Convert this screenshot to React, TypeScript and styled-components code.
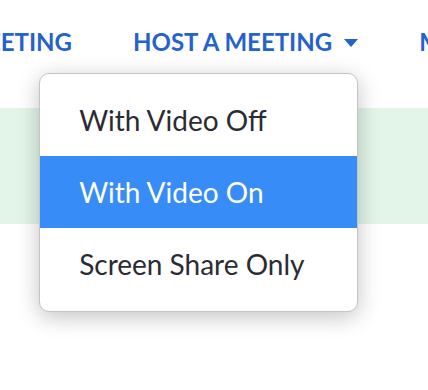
import React from 'react'
import styled, { createGlobalStyle } from 'styled-components'

const GlobalStyle = createGlobalStyle`
  html, body {
    margin: 0;
    padding: 0;
    background: #ffffff;
    overflow: hidden;
  }
  body {
    font-family: Lato, 'Open Sans', sans-serif;
    width: 428px;
    height: 390px;
  }
`

const items = ['With Video Off', 'With Video On', 'Screen Share Only']

export default function App() {
  return (
    <>
      <GlobalStyle />
      <Page>
        <Nav>
          <ClippedItem>
            <NavLink>JOIN A MEETING</NavLink>
          </ClippedItem>
          <HostItem>
            <NavLink>HOST A MEETING</NavLink>
            <Caret viewBox="0 0 14 8" aria-hidden>
              <polygon points="0,0 14,0 7,8" fill="currentColor" />
            </Caret>
            <Menu>
              {items.map((label, i) => (
                <MenuItem key={label} active={i === 1}>
                  {label}
                </MenuItem>
              ))}
            </Menu>
          </HostItem>
          <NavLink>MY ACCOUNT</NavLink>
        </Nav>
        <Banner />
      </Page>
    </>
  )
}

const Page = styled.div`
  display: flex;
  flex-direction: column;
  width: 428px;
`

const Nav = styled.nav`
  display: flex;
  align-items: flex-start;
  gap: 61px;
  height: 108px;
  padding-top: 27px;
  box-sizing: border-box;
  white-space: nowrap;
`

const NavLink = styled.span`
  font-family: Lato, sans-serif;
  font-weight: 700;
  font-size: 24px;
  line-height: 30px;
  color: #2462cc;
`

const ClippedItem = styled.div`
  display: flex;
  justify-content: flex-end;
  width: 72px;
  flex-shrink: 0;
  overflow: hidden;
`

const HostItem = styled.div`
  position: relative;
  display: flex;
  align-items: center;
  gap: 12px;
  flex-shrink: 0;
  color: #2462cc;
`

const Caret = styled.svg`
  width: 14px;
  height: 8px;
  margin-top: 2px;
`

const Menu = styled.div`
  position: absolute;
  top: 46px;
  right: 0;
  width: 319px;
  box-sizing: border-box;
  padding: 10px 0 11px;
  background: #ffffff;
  border: 1px solid #c4c4c4;
  border-radius: 10px;
  box-shadow: 0 5px 22px rgba(0, 0, 0, 0.24);
  z-index: 2;
`

const MenuItem = styled.div<{ active?: boolean }>`
  display: flex;
  align-items: center;
  height: 72px;
  padding-left: 39px;
  font-family: Lato, sans-serif;
  font-size: 28px;
  font-weight: 400;
  color: ${(p) => (p.active ? '#ffffff' : '#2b2b33')};
  background: ${(p) => (p.active ? '#388cf8' : 'transparent')};
`

const Banner = styled.div`
  height: 116px;
  background: #e2f5e8;
`
